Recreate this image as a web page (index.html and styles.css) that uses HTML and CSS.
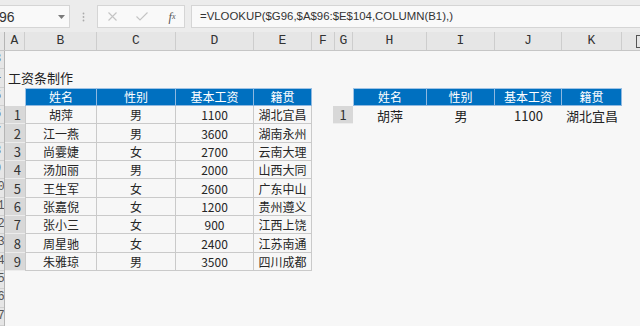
FILE: index.html
```html
<!DOCTYPE html>
<html lang="zh-CN">
<head>
<meta charset="utf-8">
<title>工资条制作</title>
<link rel="stylesheet" href="styles.css">
</head>
<body>
<div class="toolbar">
  <div class="namebox">
    <span class="nb-text">96</span>
    <svg class="nb-arrow" width="7" height="4" viewBox="0 0 7 4"><path d="M0 0H7L3.5 4Z" fill="#7a7a7a"/></svg>
  </div>
  <div class="sep">
    <svg width="3" height="10" viewBox="0 0 3 10"><circle cx="1.5" cy="1.5" r="0.9" fill="#aaa"/><circle cx="1.5" cy="5" r="0.9" fill="#aaa"/><circle cx="1.5" cy="8.5" r="0.9" fill="#aaa"/></svg>
  </div>
  <div class="btnbox">
    <span class="slot"><svg width="9" height="9" viewBox="0 0 9 9"><path d="M0.5 0.5L8.5 8.5M8.5 0.5L0.5 8.5" stroke="#c4c4c4" stroke-width="1.1" fill="none"/></svg></span>
    <span class="slot"><svg width="12" height="9" viewBox="0 0 12 9"><path d="M0.5 4.5L4 8L11.5 0.5" stroke="#c4c4c4" stroke-width="1.1" fill="none"/></svg></span>
    <span class="slot fx">f<sub>x</sub></span>
  </div>
  <div class="formula">=VLOOKUP($G96,$A$96:$E$104,COLUMN(B1),)</div>
</div>

<div class="colhdr">
  <div class="ch corner"></div>
  <div class="ch w-a">A</div>
  <div class="ch w-b">B</div>
  <div class="ch w-c">C</div>
  <div class="ch w-d">D</div>
  <div class="ch w-e">E</div>
  <div class="ch w-f">F</div>
  <div class="ch w-g">G</div>
  <div class="ch w-h">H</div>
  <div class="ch w-i">I</div>
  <div class="ch w-j">J</div>
  <div class="ch w-k">K</div>
  <div class="ch last"><span class="split"></span></div>
</div>

<div class="sheet">
  <div class="strip">
    <div class="rn"><span>93</span></div>
    <div class="rn"><span>94</span></div>
    <div class="rn"><span>95</span></div>
    <div class="rn"><span>96</span></div>
    <div class="rn"><span>97</span></div>
    <div class="rn"><span>98</span></div>
    <div class="rn"><span>99</span></div>
    <div class="rn"><span>100</span></div>
    <div class="rn"><span>101</span></div>
    <div class="rn"><span>102</span></div>
    <div class="rn"><span>103</span></div>
    <div class="rn"><span>104</span></div>
    <div class="rn"><span>105</span></div>
    <div class="rn"><span>106</span></div>
    <div class="rn"><span>107</span></div>
  </div>

  <div class="left">
    <div class="title">工资条制作</div>
    <div class="tbl tbl-left">
      <div class="blank"></div>
      <div class="c h first">姓名</div><div class="c h">性别</div><div class="c h">基本工资</div><div class="c h">籍贯</div>

      <div class="n">1</div><div class="c first">胡萍</div><div class="c">男</div><div class="c">1100</div><div class="c">湖北宜昌</div>
      <div class="n">2</div><div class="c first">江一燕</div><div class="c">男</div><div class="c">3600</div><div class="c">湖南永州</div>
      <div class="n">3</div><div class="c first">尚霎婕</div><div class="c">女</div><div class="c">2700</div><div class="c">云南大理</div>
      <div class="n">4</div><div class="c first">汤加丽</div><div class="c">男</div><div class="c">2000</div><div class="c">山西大同</div>
      <div class="n">5</div><div class="c first">王生军</div><div class="c">女</div><div class="c">2600</div><div class="c">广东中山</div>
      <div class="n">6</div><div class="c first">张嘉倪</div><div class="c">女</div><div class="c">1200</div><div class="c">贵州遵义</div>
      <div class="n">7</div><div class="c first">张小三</div><div class="c">女</div><div class="c">900</div><div class="c">江西上饶</div>
      <div class="n">8</div><div class="c first">周星驰</div><div class="c">女</div><div class="c">2400</div><div class="c">江苏南通</div>
      <div class="n">9</div><div class="c first">朱雅琼</div><div class="c">男</div><div class="c">3500</div><div class="c">四川成都</div>
    </div>
  </div>

  <div class="gap-f"></div>

  <div class="right">
    <div class="tbl tbl-right">
      <div class="blank"></div>
      <div class="c h first">姓名</div><div class="c h">性别</div><div class="c h">基本工资</div><div class="c h">籍贯</div>
      <div class="n rn1">1</div><div class="d">胡萍</div><div class="d">男</div><div class="d">1100</div><div class="d">湖北宜昌</div>
    </div>
  </div>
</div>
</body>
</html>
```

FILE: styles.css
```css
html, body {
  margin: 0;
  padding: 0;
}

body {
  width: 640px;
  height: 326px;
  overflow: hidden;
  background: #f7f7f7;
  font-family: "Noto Sans CJK SC", "Noto Sans", sans-serif;
  color: #222;
}

/* ---------- toolbar / formula bar ---------- */
.toolbar {
  display: flex;
  align-items: flex-start;
  height: 32px;
  box-sizing: border-box;
  padding-top: 5px;
  background: #ececec;
}

.namebox {
  width: 70px;
  height: 23px;
  box-sizing: border-box;
  border: 1px solid #d5d5d5;
  border-left: none;
  background: #f9f9f9;
  display: flex;
  align-items: center;
  justify-content: space-between;
  padding-right: 4px;
  overflow: hidden;
}

.nb-text {
  font-family: "Liberation Sans", sans-serif;
  font-size: 14px;
  color: #333;
  margin-left: -1px;
}

.sep {
  width: 27px;
  height: 23px;
  display: flex;
  align-items: center;
  justify-content: center;
}

.btnbox {
  width: 88px;
  height: 23px;
  box-sizing: border-box;
  border: 1px solid #d5d5d5;
  background: #f9f9f9;
  display: flex;
  align-items: center;
}

.slot {
  width: 30px;
  flex: none;
  display: flex;
  align-items: center;
  justify-content: center;
}

.slot:first-child {
  margin-left: -1px;
}

.fx {
  font-family: "Liberation Serif", serif;
  font-style: italic;
  font-size: 12px;
  color: #555;
  line-height: 12px;
}

.fx sub {
  font-size: 8px;
  vertical-align: -1px;
}

.formula {
  flex: 1;
  height: 23px;
  margin-left: 6px;
  box-sizing: border-box;
  border: 1px solid #d5d5d5;
  border-right: none;
  background: #f9f9f9;
  padding-left: 8px;
  font-family: "Liberation Sans", sans-serif;
  font-size: 11.4px;
  line-height: 21px;
  color: #333;
  white-space: nowrap;
}

/* ---------- column headers ---------- */
.colhdr {
  display: flex;
  height: 19px;
  box-sizing: border-box;
  background: #e6e6e6;
  border-bottom: 1px solid #c6c6c6;
}

.ch {
  flex: none;
  box-sizing: border-box;
  border-right: 1px solid #cdcdcd;
  font-family: "Liberation Mono", monospace;
  font-size: 13px;
  line-height: 18px;
  color: #333;
  text-align: center;
}

.corner { width: 5px; border-right-color: #b5b5b5; }
.w-a { width: 20px; }
.w-b { width: 72px; }
.w-c { width: 79px; }
.w-d { width: 78px; }
.w-e { width: 58px; }
.w-f { width: 23px; }
.w-g { width: 18px; }
.w-h { width: 74px; }
.w-i { width: 68px; }
.w-j { width: 67px; }
.w-k { width: 60px; }

.last {
  flex: 1;
  border-right: none;
  display: flex;
  align-items: center;
  justify-content: flex-end;
}

.split {
  width: 4px;
  height: 11px;
  border: 1.5px solid #555;
  border-right: none;
  margin-right: -1px;
}

/* ---------- sheet ---------- */
.sheet {
  display: flex;
  align-items: flex-start;
}

/* row-number strip: only the right 4px of a wider, centred header is visible */
.strip {
  width: 5px;
  flex: none;
  box-sizing: border-box;
  border-right: 1px solid #b5b5b5;
  background: #e6e6e6;
  display: grid;
  grid-auto-rows: 18.35px;
  overflow: hidden;
}

.rn {
  width: 4px;
  border-bottom: 1px solid #d0d0d0;
  box-sizing: border-box;
  overflow: hidden;
}

.rn span {
  display: block;
  width: 26px;
  margin-left: -19px;
  text-align: center;
  font-family: "Liberation Mono", monospace;
  font-size: 12px;
  line-height: 17px;
  color: #555;
}

.left {
  width: 307px;
  flex: none;
  padding-top: 18.35px;
}

.title {
  height: 18.35px;
  line-height: 18.35px;
  padding-left: 3px;
  font-size: 13px;
  color: #222;
}

.gap-f {
  width: 23px;
  flex: none;
}

.right {
  width: 287px;
  flex: none;
  padding-top: 36.7px;
}

.tbl {
  display: grid;
  grid-auto-rows: 18.35px;
}

.tbl-left {
  grid-template-columns: 20px 72px 79px 78px 58px;
}

.tbl-right {
  grid-template-columns: 18px 74px 68px 67px 60px;
}

.c {
  display: flex;
  align-items: center;
  justify-content: center;
  box-sizing: border-box;
  border-right: 1px solid #cacaca;
  border-bottom: 1px solid #cacaca;
  font-size: 12px;
  color: #262626;
  white-space: nowrap;
}

.c.first {
  border-left: 1px solid #cacaca;
}

.c.h {
  background: #0070c0;
  color: #fff;
  border-right-color: #8fb8e0;
  border-bottom-color: #8fb8e0;
  border-top: 1px solid #9fc3e6;
}

.c.h.first {
  border-left-color: #9fc3e6;
}

.n {
  display: flex;
  align-items: center;
  justify-content: flex-end;
  padding-right: 4px;
  box-sizing: border-box;
  background: #d8d8d8;
  border-bottom: 1px solid #ececec;
  font-size: 13px;
  color: #333;
}

.n.rn1 {
  justify-content: center;
  padding-right: 0;
  margin-left: -2px;
}

.d {
  display: flex;
  align-items: center;
  justify-content: center;
  font-size: 13px;
  color: #222;
  white-space: nowrap;
}
```
